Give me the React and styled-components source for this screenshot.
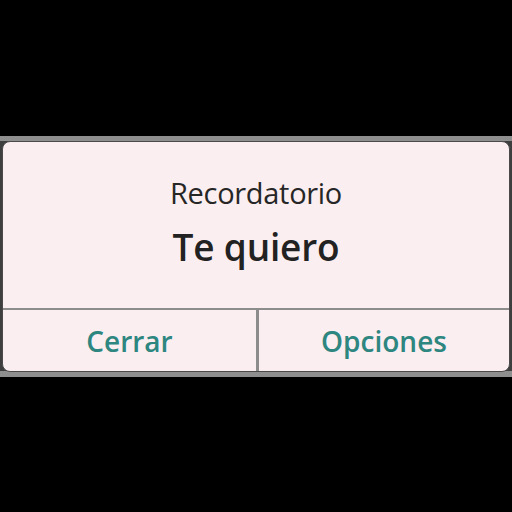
import styled, { createGlobalStyle } from "styled-components";

const Global = createGlobalStyle`
    html, body {
        margin: 0;
        background: #000;
    }
    #root {
        width: 512px;
        height: 512px;
    }
`

export default function App() {
    return (
        <Page>
            <Global />
            <Frame>
                <Card>
                    <Header>
                        <Title>Recordatorio</Title>
                        <Message>Te quiero</Message>
                    </Header>
                    <Actions>
                        <Action>Cerrar</Action>
                        <Action $divider>Opciones</Action>
                    </Actions>
                </Card>
            </Frame>
        </Page>
    )
}

const Page = styled.div`
    width: 512px;
    height: 512px;
    padding-top: 136px;
    box-sizing: border-box;
    font-family: "Open Sans", "Noto Sans", sans-serif;
`

const Frame = styled.div`
    padding: 5px 2px 5px 2px;
    background: linear-gradient(#8e8e8e, #8e8e8e) top / 100% 5px no-repeat,
        linear-gradient(#8e8e8e, #8e8e8e) bottom / 100% 6px no-repeat,
        #3e3e3e;
`

const Card = styled.div`
    height: 229px;
    background: #fbeef0;
    border: 1px solid #4a4a4a;
    border-radius: 8px;
    display: flex;
    flex-direction: column;
    overflow: hidden;
`

const Header = styled.div`
    height: 168px;
    display: flex;
    flex-direction: column;
    align-items: center;
    padding-top: 30px;
    box-sizing: border-box;
    border-bottom: 2px solid #8c8c8c;
`

const Title = styled.div`
    font-size: 29px;
    font-weight: 500;
    color: #262626;
    line-height: 42px;
    letter-spacing: -0.3px;
`

const Message = styled.div`
    font-size: 37px;
    font-weight: 600;
    color: #222;
    line-height: 50px;
    margin-top: 8px;
    letter-spacing: -0.2px;
`

const Actions = styled.div`
    flex: 1;
    display: grid;
    grid-template-columns: 1fr 1fr;
`

const Action = styled.div`
    display: flex;
    align-items: center;
    justify-content: center;
    font-size: 28px;
    font-weight: 600;
    color: #2d8680;
    padding-top: 1px;
    border-left: ${p => p.$divider ? "3px solid #8c8c8c" : "none"};
`
